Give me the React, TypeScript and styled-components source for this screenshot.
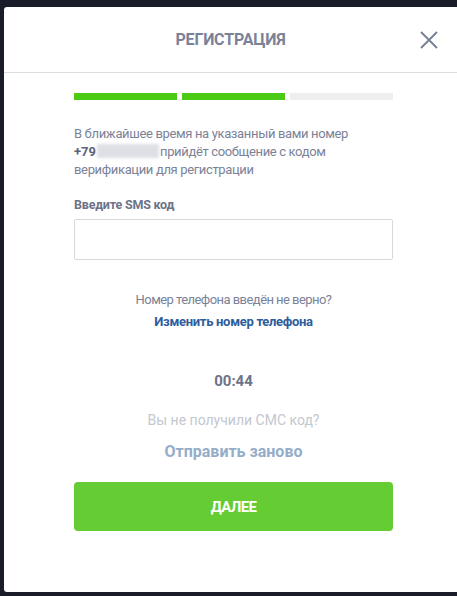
import React from "react";
import styled, { createGlobalStyle } from "styled-components";

const GlobalStyle = createGlobalStyle`
  html, body {
    margin: 0;
    padding: 0;
    background: #1b1c29;
  }
  body {
    font-family: "Roboto", "Liberation Sans", sans-serif;
  }
`;

const Page = styled.div`
  width: 457px;
  height: 596px;
  padding: 7px 0 4px 4px;
  box-sizing: border-box;
  overflow: hidden;
`;

const Modal = styled.div`
  background: #ffffff;
  height: 585px;
  width: 470px;
  border-radius: 3px 0 0 3px;
  display: flex;
  flex-direction: column;
`;

const Header = styled.div`
  height: 65px;
  border-bottom: 1px solid #dcdde2;
  display: flex;
  align-items: center;
  justify-content: center;
  position: relative;
  width: 453px;
`;

const Title = styled.h2`
  margin: 0;
  font-size: 16px;
  font-weight: 700;
  color: #7b8298;
  letter-spacing: -0.2px;
`;

const CloseButton = styled.button`
  position: absolute;
  right: 19px;
  top: 24px;
  width: 18px;
  height: 18px;
  padding: 0;
  border: none;
  background: none;
  cursor: pointer;
  display: flex;
`;

const Body = styled.div`
  width: 319px;
  margin-left: 70px;
  display: flex;
  flex-direction: column;
  padding-top: 20px;
`;

const Progress = styled.div`
  display: grid;
  grid-template-columns: repeat(3, 1fr);
  gap: 5px;
`;

const Step = styled.div<{ $done?: boolean }>`
  height: 7px;
  background: ${(p) => (p.$done ? "#4ccb16" : "#eeeeef")};
`;

const Info = styled.p`
  margin: 25px 0 0;
  font-size: 13px;
  line-height: 18px;
  letter-spacing: -0.35px;
  color: #7b8298;
`;

const Phone = styled.b`
  color: #5c6277;
  letter-spacing: 0;
`;

const Blur = styled.span`
  display: inline-block;
  width: 62px;
  height: 14px;
  margin: 0 1px 0 1px;
  vertical-align: -2px;
  background: #dfe0e6;
  filter: blur(1.5px);
`;

const Label = styled.label`
  margin-top: 18px;
  font-size: 12.5px;
  font-weight: 700;
  color: #6d7388;
  letter-spacing: -0.2px;
`;

const Input = styled.input`
  margin-top: 7px;
  height: 41px;
  box-sizing: border-box;
  border: 1px solid #d8d9de;
  border-radius: 2px;
  outline: none;
  font-size: 14px;
  padding: 0 10px;
`;

const Center = styled.div<{ $top: number }>`
  margin-top: ${(p) => p.$top}px;
  display: flex;
  flex-direction: column;
  align-items: center;
  text-align: center;
`;

const Hint = styled.span<{ $light?: boolean }>`
  font-size: ${(p) => (p.$light ? 14 : 13)}px;
  line-height: 20px;
  letter-spacing: ${(p) => (p.$light ? 0 : -0.55)}px;
  color: ${(p) => (p.$light ? "#c4c7d0" : "#7b8298")};
`;

const Link = styled.a<{ $muted?: boolean; $size: number }>`
  margin-top: ${(p) => (p.$muted ? 0 : 1)}px;
  font-size: ${(p) => p.$size}px;
  font-weight: 700;
  line-height: 22px;
  letter-spacing: ${(p) => (p.$muted ? 0 : -0.3)}px;
  color: ${(p) => (p.$muted ? "#95adc9" : "#2d5d9c")};
  text-decoration: none;
  cursor: pointer;
`;

const Timer = styled.span`
  font-size: 15px;
  font-weight: 700;
  color: #6d7388;
`;

const NextButton = styled.button`
  margin-top: 19px;
  height: 49px;
  border: none;
  border-radius: 4px;
  background: #66cc33;
  color: #ffffff;
  font-family: inherit;
  font-size: 15px;
  font-weight: 700;
  letter-spacing: -0.7px;
  cursor: pointer;
`;

export default function App() {
  return (
    <Page>
      <GlobalStyle />
      <Modal>
        <Header>
          <Title>РЕГИСТРАЦИЯ</Title>
          <CloseButton aria-label="Закрыть">
            <svg width="18" height="18" viewBox="0 0 18 18">
              <path
                d="M1 1 L17 17 M17 1 L1 17"
                stroke="#7b8298"
                strokeWidth="2"
                fill="none"
              />
            </svg>
          </CloseButton>
        </Header>
        <Body>
          <Progress>
            <Step $done />
            <Step $done />
            <Step />
          </Progress>
          <Info>
            В ближайшее время на указанный вами номер
            <br />
            <Phone>+79</Phone>
            <Blur />
            прийдёт сообщение с кодом
            <br />
            верификации для регистрации
          </Info>
          <Label>Введите SMS код</Label>
          <Input type="text" />
          <Center $top={30}>
            <Hint>Номер телефона введён не верно?</Hint>
            <Link $size={13}>Изменить номер телефона</Link>
          </Center>
          <Center $top={39}>
            <Timer>00:44</Timer>
          </Center>
          <Center $top={20}>
            <Hint $light>Вы не получили СМС код?</Hint>
          </Center>
          <Center $top={11}>
            <Link $muted $size={16}>Отправить заново</Link>
          </Center>
          <NextButton>ДАЛЕЕ</NextButton>
        </Body>
      </Modal>
    </Page>
  );
}
